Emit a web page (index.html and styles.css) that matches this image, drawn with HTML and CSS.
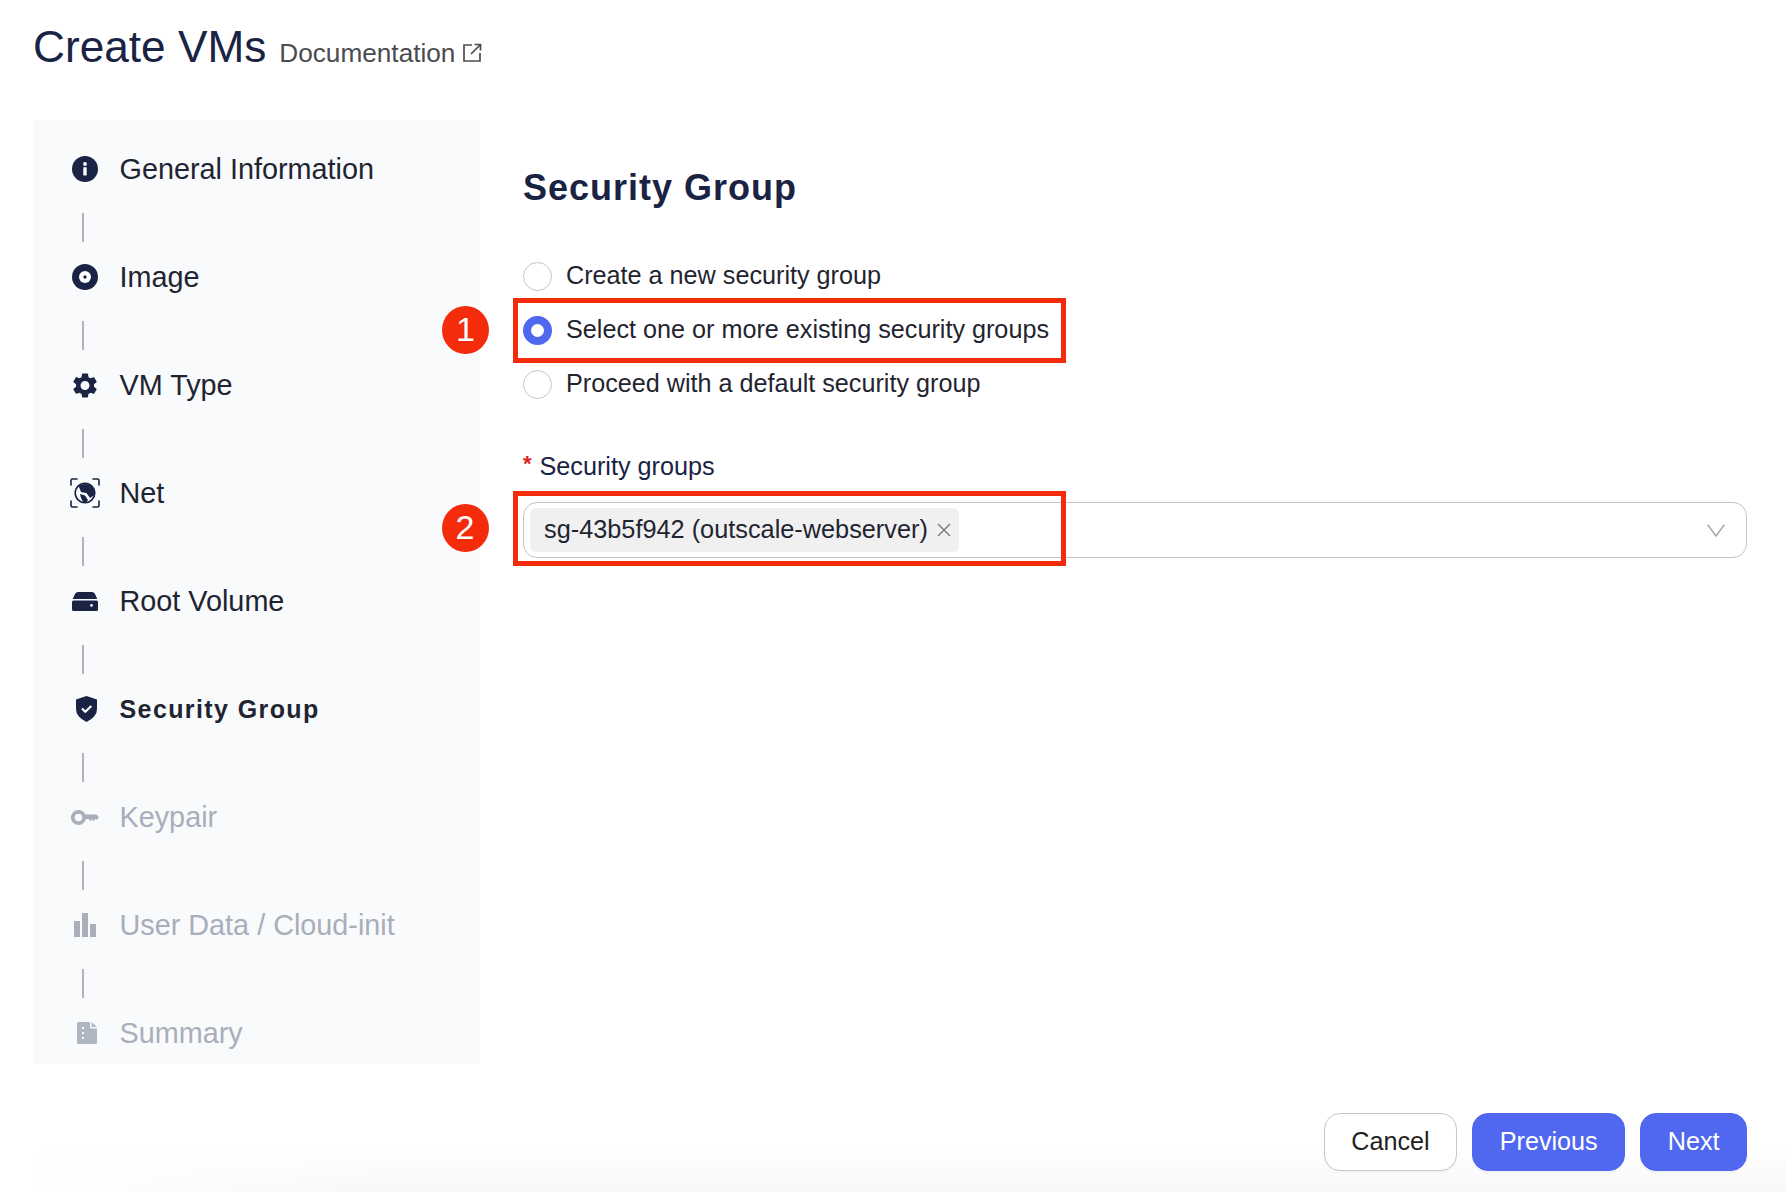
FILE: index.html
```html
<!DOCTYPE html>
<html lang="en">
<head>
<meta charset="utf-8">
<title>Create VMs</title>
<link rel="stylesheet" href="styles.css">
</head>
<body>
<div class="page">
  <header class="page-header">
    <h1 class="page-title">Create VMs</h1>
    <a class="doc-link">Documentation
      <svg class="doc-icon" viewBox="0 0 20 20" fill="none" stroke="currentColor" stroke-width="1.700"><path d="M10 2H2v16h16v-8"/><path d="M18 2 9 11M12.500 1.500h6v6"/></svg>
    </a>
  </header>

  <div class="content">
    <nav class="steps">
      <div class="step">
        <span class="step-icon"><svg width="26" height="26" viewBox="0 0 26 26"><circle cx="13" cy="13" r="13" fill="#1a2344"/><circle cx="13" cy="8" r="1.900" fill="#fff"/><rect x="11.300" y="11.200" width="3.400" height="8.400" rx=".6" fill="#fff"/></svg></span>
        <span class="step-label">General Information</span>
      </div>
      <div class="step-line"></div>
      <div class="step">
        <span class="step-icon"><svg width="26" height="26" viewBox="0 0 26 26"><circle cx="13" cy="13" r="13" fill="#1a2344"/><circle cx="13" cy="13" r="6" fill="#fff"/><circle cx="13" cy="13" r="1.700" fill="#1a2344"/></svg></span>
        <span class="step-label">Image</span>
      </div>
      <div class="step-line"></div>
      <div class="step">
        <span class="step-icon"><svg width="31" height="31" viewBox="0 0 24 24" fill="#1a2344"><path d="M19.140 12.940c.04-.3.06-.61.06-.94 0-.32-.02-.64-.07-.94l2.030-1.580c.18-.14.23-.41.12-.61l-1.920-3.320c-.12-.22-.37-.29-.59-.22l-2.390.96c-.5-.38-1.030-.7-1.620-.94l-.36-2.540c-.04-.24-.24-.41-.48-.41h-3.840c-.24 0-.43.17-.47.41l-.36 2.540c-.59.24-1.130.57-1.620.94l-2.390-.96c-.22-.08-.47 0-.59.22L2.740 8.870c-.12.21-.08.47.12.61l2.030 1.580c-.05.3-.09.63-.09.94s.02.64.07.94l-2.030 1.580c-.18.14-.23.41-.12.61l1.920 3.320c.12.22.37.29.59.22l2.390-.96c.5.38 1.030.7 1.620.94l.36 2.540c.05.24.24.41.48.41h3.840c.24 0 .44-.17.47-.41l.36-2.540c.59-.24 1.130-.56 1.620-.94l2.390.96c.22.08.47 0 .59-.22l1.920-3.320c.12-.22.07-.47-.12-.61l-2.010-1.580zM12 15.600c-1.980 0-3.600-1.620-3.600-3.600s1.620-3.600 3.600-3.600 3.600 1.620 3.600 3.600-1.620 3.600-3.600 3.600z"/></svg></span>
        <span class="step-label">VM Type</span>
      </div>
      <div class="step-line"></div>
      <div class="step">
        <span class="step-icon"><svg width="30" height="30" viewBox="0 0 30 30"><g fill="none" stroke="#1a2344" stroke-width="1.600" stroke-linecap="round"><path d="M1 7V2.500Q1 1 2.500 1H7M23 1h4.500Q29 1 29 2.500V7M29 23v4.500q0 1.500-1.500 1.500H23M7 29H2.500Q1 29 1 27.500V23"/><circle cx="15" cy="15" r="9.800"/></g><path fill="#1a2344" d="M8.500 8.500A9.800 9.800 0 0 1 24.500 13l.1 4-4.600 3-3.500-5-5.500-1-1.500-4zM10 16l5 1.500 3 4.500-2 2.500h-2.500L11 20z"/></svg></span>
        <span class="step-label">Net</span>
      </div>
      <div class="step-line"></div>
      <div class="step">
        <span class="step-icon"><svg width="26" height="19" viewBox="0 0 26 19"><path fill="#1a2344" d="M6 0h14q2 0 3 2l2.300 5H.7L3 2q1-2 3-2z"/><path fill="#1a2344" fill-rule="evenodd" d="M1.500 8.500h23q1.500 0 1.500 1.500v7.500q0 1.500-1.500 1.500h-23Q0 19 0 17.500V10q0-1.500 1.500-1.500zM19.500 12a1.400 1.400 0 1 0 0 2.800 1.400 1.400 0 0 0 0-2.800z"/></svg></span>
        <span class="step-label">Root Volume</span>
      </div>
      <div class="step-line"></div>
      <div class="step is-current">
        <span class="step-icon step-icon-shield"><svg width="21" height="26" viewBox="0 0 21 26"><path fill="#1a2344" d="M10.500 0 21 3.500V13q0 8-10.500 13Q0 21 0 13V3.500z"/><path fill="none" stroke="#fff" stroke-width="2.200" d="m6 12.500 3.300 3.300 6-5.800"/></svg></span>
        <span class="step-label">Security Group</span>
      </div>
      <div class="step-line"></div>
      <div class="step is-pending">
        <span class="step-icon"><svg width="28" height="17" viewBox="0 0 28 17"><circle cx="7.500" cy="8.500" r="5.700" fill="none" stroke="#a9aeba" stroke-width="3.800"/><path fill="#a9aeba" d="M13 5.500h12.500L28 8.200l-2.500 2.800-1.500-1-1.500 2.500-1.500-2.500-1.500 2.500-1.500-2.500H13z"/></svg></span>
        <span class="step-label">Keypair</span>
      </div>
      <div class="step-line"></div>
      <div class="step is-pending">
        <span class="step-icon"><svg width="22" height="24" viewBox="0 0 22 24" fill="#a9aeba"><rect y="8" width="6" height="16"/><rect x="8" width="6" height="24"/><rect x="16" y="11" width="6" height="13"/></svg></span>
        <span class="step-label">User Data / Cloud-init</span>
      </div>
      <div class="step-line"></div>
      <div class="step is-pending">
        <span class="step-icon step-icon-doc"><svg width="20" height="22" viewBox="0 0 20 22"><path fill="#b0b5c2" d="M1.500 0H13v5.500q0 1 1 1h6V20.500q0 1.500-1.500 1.500h-17Q0 22 0 20.500v-19Q0 0 1.500 0zM14.500 0 20 5h-5.500z"/><g fill="#f8fafc"><rect x="5" y="5" width="2" height="2"/><rect x="5" y="10" width="2" height="2"/><rect x="5" y="15" width="2" height="2"/></g></svg></span>
        <span class="step-label">Summary</span>
      </div>
    </nav>

    <main class="panel">
      <h2 class="panel-title">Security Group</h2>
      <div class="radio-group">
        <label class="radio-row"><span class="radio"></span>Create a new security group</label>
        <label class="radio-row">
          <span class="radio is-checked"></span>Select one or more existing security groups
          <span class="callout-box callout-box-radio"></span>
          <span class="badge">1</span>
        </label>
        <label class="radio-row"><span class="radio"></span>Proceed with a default security group</label>
      </div>
      <div class="field-label"><span class="required">*</span>Security groups</div>
      <div class="select">
        <span class="tag">sg-43b5f942 (outscale-webserver)
          <svg class="tag-close" viewBox="0 0 14 14" fill="none" stroke="#777" stroke-width="1.400"><path d="M1 1l12 12M13 1 1 13"/></svg>
        </span>
        <svg class="chevron" viewBox="0 0 18 13" fill="none" stroke="#a8a8a8" stroke-width="1.500"><path d="M.7.7 9 12 17.300.7"/></svg>
        <span class="callout-box callout-box-select"></span>
        <span class="badge">2</span>
      </div>
    </main>
  </div>

  <footer class="actions">
    <button class="btn">Cancel</button>
    <button class="btn btn-primary">Previous</button>
    <button class="btn btn-primary">Next</button>
  </footer>
</div>
</body>
</html>
```

FILE: styles.css
```css
* { box-sizing: border-box; }

html, body { margin: 0; padding: 0; }

body {
  background: #fff;
  color: #1f2430;
  font-family: "Liberation Sans", Arial, sans-serif;
}

.page {
  height: 1192px;
  overflow: hidden;
  padding: 0 39px 0 33px;
  display: flex;
  flex-direction: column;
  background:
    linear-gradient(90deg, #fff 30px, rgba(255,255,255,0) 420px) no-repeat bottom / 100% 44px,
    linear-gradient(rgba(247,247,248,0), #f7f7f8) no-repeat bottom / 100% 44px;
}

.page-header {
  height: 120px;
  flex: none;
  display: flex;
  align-items: baseline;
  gap: 13px;
  padding-top: 22px;
}

.page-title {
  margin: 0;
  font-size: 44.200px;
  line-height: 50px;
  font-weight: 400;
  color: #1a2344;
}

.doc-link {
  display: flex;
  align-items: baseline;
  gap: 7px;
  font-size: 26.200px;
  color: #4a4c50;
}

.doc-icon {
  width: 20px;
  height: 20px;
  align-self: center;
  margin-top: -2px;
}

.content {
  height: 944px;
  flex: none;
  display: grid;
  grid-template-columns: 447px 1fr;
  column-gap: 43px;
}

.steps {
  background: #f8fafc;
  padding: 29px 0 0 37px;
}

.step {
  height: 40px;
  display: flex;
  align-items: center;
  gap: 19.500px;
  font-size: 28.800px;
  color: #1f2430;
}

.step-icon {
  width: 30px;
  display: flex;
  justify-content: center;
  align-items: center;
}

.step-icon-shield, .step-icon-doc { padding-left: 3px; }

.is-current { font-size: 25px; font-weight: 700; letter-spacing: 1.400px; }

.is-pending { color: #a9aeba; }

.step-line {
  width: 2px;
  height: 29px;
  margin: 24px 0 15px 12px;
  background: #b3b4b8;
}

.panel { position: relative; }

.panel-title {
  margin: 48px 0 41px;
  font-size: 36px;
  line-height: 40px;
  font-weight: 700;
  letter-spacing: 1px;
  color: #1a2344;
}

.radio-row {
  position: relative;
  height: 54px;
  padding-bottom: 2px;
  display: flex;
  align-items: center;
  gap: 14px;
  font-size: 25.200px;
  color: #1f2430;
}

.radio {
  width: 29px;
  height: 29px;
  margin-top: 2px;
  border: 1.500px solid #c6c6c6;
  border-radius: 50%;
  background: #fff;
  flex: none;
}

.radio.is-checked {
  border: 8.500px solid #5067f0;
}

.field-label {
  margin-top: 38px;
  height: 34px;
  display: flex;
  align-items: center;
  gap: 8px;
  font-size: 25.200px;
  color: #1a2344;
}

.required { color: #e0201c; font-size: 22px; font-weight: 700; margin-bottom: 4px; }

.select {
  position: relative;
  margin-top: 19px;
  height: 56px;
  border: 1.500px solid #c4c4c4;
  border-radius: 14px;
  display: flex;
  align-items: center;
  padding-left: 6px;
}

.tag {
  height: 44px;
  width: 429px;
  flex: none;
  padding-left: 14px;
  padding-bottom: 2px;
  display: flex;
  align-items: center;
  gap: 9px;
  background: #f0f0f0;
  border-radius: 6px;
  font-size: 25.300px;
  color: #1f2430;
  white-space: nowrap;
}

.tag-close { width: 14px; height: 14px; flex: none; margin-top: 2px; }

.chevron {
  width: 18px;
  height: 13px;
  margin-left: auto;
  margin-right: 21px;
  margin-top: 1px;
}

.callout-box {
  position: absolute;
  left: -10px;
  width: 553px;
  border: 5px solid #f52c0c;
  pointer-events: none;
}

.callout-box-radio { top: -5px; height: 65px; }

.callout-box-select { top: -12px; height: 75px; left: -11.500px; }

.badge {
  position: absolute;
  left: -81px;
  top: 3px;
  width: 47px;
  height: 48px;
  border-radius: 50%;
  background: #f52c0c;
  color: #fff;
  font-size: 34px;
  line-height: 46px;
  text-align: center;
}

.select .badge { left: -82.500px; top: 1px; }

.actions {
  margin-top: 49px;
  display: flex;
  justify-content: flex-end;
  gap: 15px;
}

.btn {
  height: 58px;
  padding: 0 26.500px 2px;
  border: 1.500px solid #c6c6c6;
  border-radius: 16px;
  background: #fff;
  color: #1f1f1f;
  font: 400 25.200px "Liberation Sans", Arial, sans-serif;
  box-shadow: 0 2px 3px rgba(0,0,0,.03);
}

.btn-primary {
  border-color: #5067f0;
  background: #5067f0;
  color: #fff;
}
```
